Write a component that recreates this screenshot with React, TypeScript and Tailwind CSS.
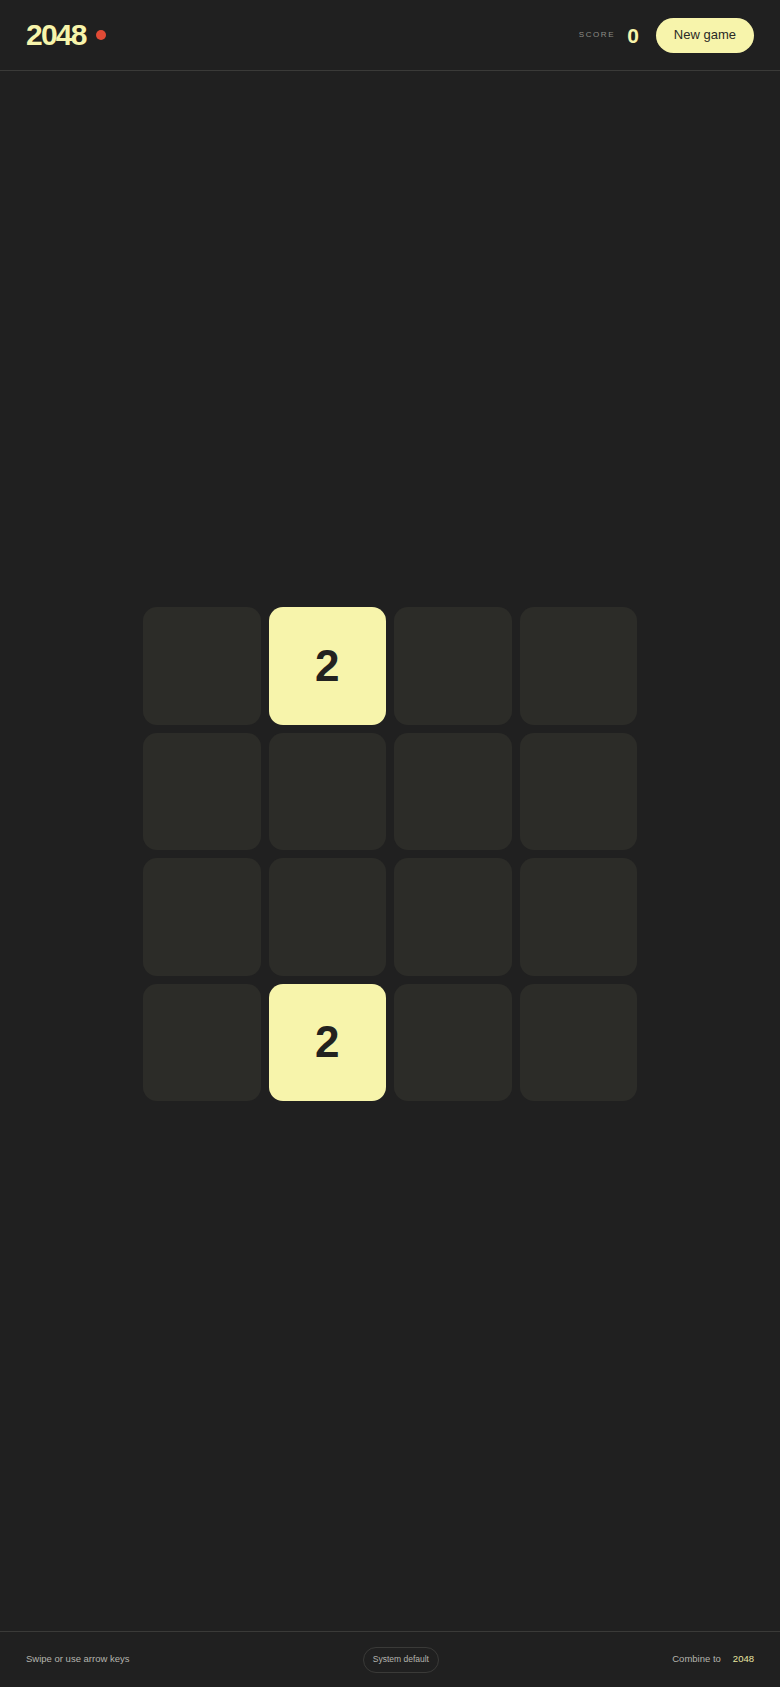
const board = [
  [0, 2, 0, 0],
  [0, 0, 0, 0],
  [0, 0, 0, 0],
  [0, 2, 0, 0],
];

export default function App() {
  return (
    <div className="flex h-[1687px] flex-col bg-[#202020] font-['Liberation_Sans',Arial,sans-serif] text-[#f7f4ab]">
      {/* Header */}
      <header className="flex h-[71px] shrink-0 items-center justify-between border-b border-[#3a3a38] px-[26px]">
        <div className="flex items-center gap-[10px]">
          <h1 className="text-[30px] font-bold leading-none tracking-[-0.06em] text-[#f7f4ab]">2048</h1>
          <span className="h-[10px] w-[10px] rounded-full bg-[#e04a35]" />
        </div>
        <div className="flex items-center">
          <span className="text-[8px] tracking-[0.2em] text-[#8c8c86]">SCORE</span>
          <span className="ml-[12px] text-[21px] font-bold leading-none text-[#f7f4ab]">0</span>
          <button className="ml-[17px] h-[35px] rounded-full bg-[#f7f4ab] px-[18px] text-[13px] text-[#2a2a26]">
            New game
          </button>
        </div>
      </header>

      {/* Board */}
      <main className="flex flex-1 items-center justify-center pt-[6px]">
        <div className="grid w-[494px] grid-cols-4 gap-[8px]">
          {board.flat().map((v, i) => (
            <div
              key={i}
              className={`flex h-[117.5px] items-center justify-center rounded-[14px] ${
                v ? 'bg-[#f7f4ab] text-[#222220]' : 'bg-[#2c2c28]'
              }`}
            >
              {v ? <span className="text-[44px] font-bold leading-none">{v}</span> : null}
            </div>
          ))}
        </div>
      </main>

      {/* Footer */}
      <footer className="flex h-[56px] shrink-0 items-center justify-between border-t border-[#3a3a38] px-[26px] text-[9.5px] text-[#b4b4ae]">
        <span>Swipe or use arrow keys</span>
        <button className="h-[26px] rounded-full border border-[#3a3a38] px-[9px] text-[8.5px] text-[#b4b4ae]">
          System default
        </button>
        <div className="flex items-center gap-[12px]">
          <span>Combine to</span>
          <span className="text-[#e8e5a0]">2048</span>
        </div>
      </footer>
    </div>
  );
}
